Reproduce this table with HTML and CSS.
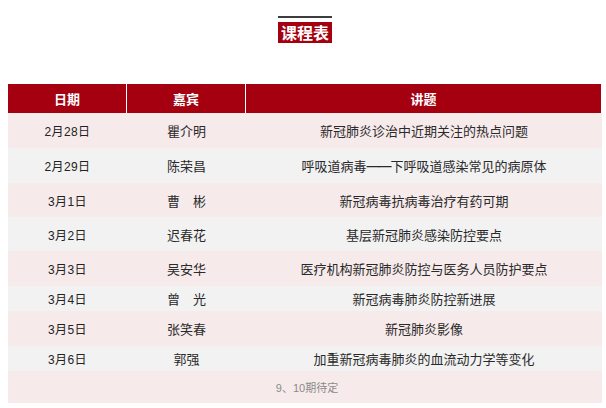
FILE: index.html
```html
<!DOCTYPE html>
<html lang="zh">
<head>
<meta charset="utf-8">
<link rel="stylesheet" href="styles.css">
</head>
<body>
<div class="page">
  <div class="title-wrap">
    <div class="title-line"></div>
    <div class="title">课程表</div>
  </div>
  <div class="table">
    <div class="row head">
      <div class="c1">日期</div>
      <div class="c2">嘉宾</div>
      <div class="c3">讲题</div>
    </div>
    <div class="row pink h35">
      <div class="c1 date">2月28日</div>
      <div class="c2">瞿介明</div>
      <div class="c3">新冠肺炎诊治中近期关注的热点问题</div>
    </div>
    <div class="row grey h35">
      <div class="c1 date">2月29日</div>
      <div class="c2">陈荣昌</div>
      <div class="c3">呼吸道病毒<span class="dash">——</span>下呼吸道感染常见的病原体</div>
    </div>
    <div class="row pink h34">
      <div class="c1 date">3月1日</div>
      <div class="c2">曹　彬</div>
      <div class="c3">新冠病毒抗病毒治疗有药可期</div>
    </div>
    <div class="row grey h34">
      <div class="c1 date">3月2日</div>
      <div class="c2">迟春花</div>
      <div class="c3">基层新冠肺炎感染防控要点</div>
    </div>
    <div class="row pink h35">
      <div class="c1 date">3月3日</div>
      <div class="c2">吴安华</div>
      <div class="c3">医疗机构新冠肺炎防控与医务人员防护要点</div>
    </div>
    <div class="row grey h25">
      <div class="c1 date">3月4日</div>
      <div class="c2">曾　光</div>
      <div class="c3">新冠病毒肺炎防控新进展</div>
    </div>
    <div class="row pink h35">
      <div class="c1 date">3月5日</div>
      <div class="c2">张笑春</div>
      <div class="c3">新冠肺炎影像</div>
    </div>
    <div class="row grey h25">
      <div class="c1 date">3月6日</div>
      <div class="c2">郭强</div>
      <div class="c3">加重新冠病毒肺炎的血流动力学等变化</div>
    </div>
    <div class="row pink foot">
      <div class="full">9、10期待定</div>
    </div>
  </div>
</div>
</body>
</html>
```

FILE: styles.css
```css
html, body {
  margin: 0;
  padding: 0;
  background: #fff;
}
body {
  font-family: "Noto Sans CJK SC", "Liberation Sans", sans-serif;
  color: #333;
}
.page {
  width: 594px;
  margin-left: 8px;
  padding-top: 16px;
}
.title-wrap {
  display: flex;
  flex-direction: column;
  align-items: center;
}
.title-line {
  width: 54px;
  height: 2px;
  background: #3d3d3d;
}
.title {
  margin-top: 4px;
  width: 54px;
  height: 21px;
  background: #a50010;
  color: #fff;
  font-weight: bold;
  font-size: 16px;
  line-height: 21px;
  text-align: center;
}
.table {
  margin-top: 41px;
  display: flex;
  flex-direction: column;
}
.row {
  display: grid;
  grid-template-columns: 119px 119px 1fr;
  align-items: center;
  text-align: center;
  font-size: 13px;
  color: #2a2a2a;
}
.row > div {
  display: flex;
  align-items: center;
  justify-content: center;
  height: 100%;
}
.head {
  height: 29px;
  background: #a50010;
  color: #fff;
  font-weight: bold;
  font-size: 13px;
  border-right: 1px solid #fff;
}
.head .c1, .head .c2 {
  border-right: 1px solid #fff;
}
.pink { background: #f7eaea; }
.grey { background: #f2f2f2; }
.h35 { height: 35px; }
.h34 { height: 34px; }
.h25 { height: 25px; }
.dash {
  font-family: "Liberation Sans", sans-serif;
  font-weight: bold;
  letter-spacing: -1px;
}
.date {
  font-family: "Liberation Sans", "Noto Sans CJK SC", sans-serif;
  font-size: 12px;
  letter-spacing: 0.4px;
  color: #222;
}
.foot {
  height: 32px;
  grid-template-columns: 1fr;
}
.foot .full {
  font-size: 11px;
  color: #8a8a8a;
  font-family: "Liberation Sans", "Noto Sans CJK SC", sans-serif;
  padding-left: 4px;
}
```
